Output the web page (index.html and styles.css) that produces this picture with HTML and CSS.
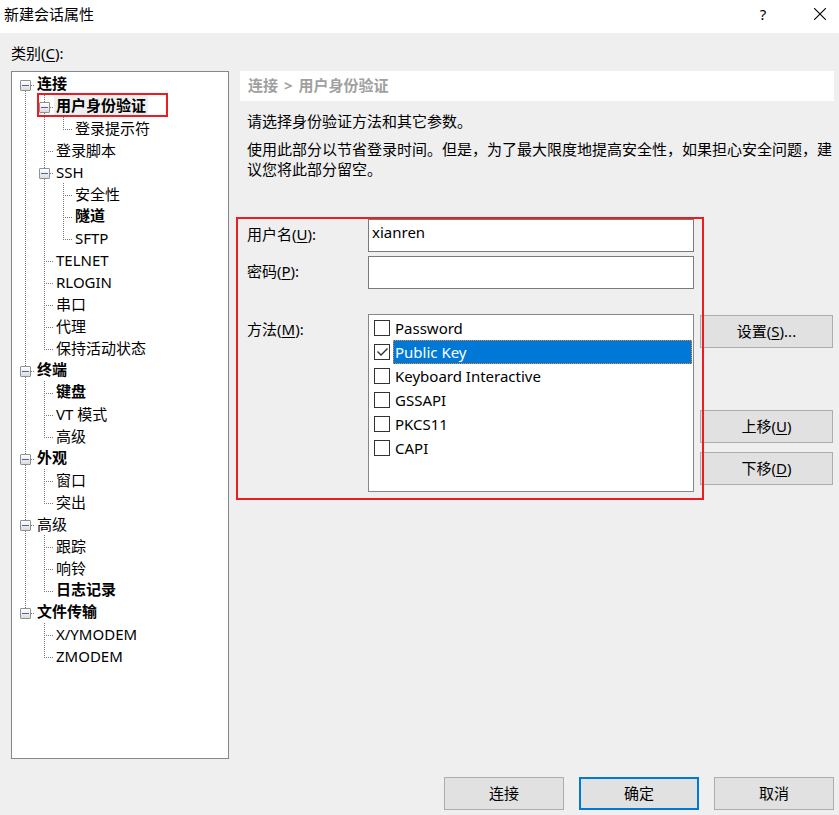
FILE: index.html
```html
<!DOCTYPE html>
<html lang="zh-CN">
<head>
<meta charset="utf-8">
<meta name="viewport" content="width=device-width, initial-scale=1">
<title>新建会话属性</title>
<link rel="stylesheet" href="styles.css">
</head>
<body>
<header class="titlebar">
  <h1 class="title">新建会话属性</h1>
  <button class="caption" type="button">?</button>
  <button class="caption" type="button" aria-label="关闭">
    <svg width="12" height="12" viewBox="0 0 12 12" fill="none" stroke="#000" stroke-width="1.1"><path d="M0 0L12 12M12 0L0 12"/></svg>
  </button>
</header>
<main class="content">
  <nav class="sidebar">
    <h2 class="category" id="category">类别(<u>C</u>):</h2>
    <div class="tree-box">
      <ul class="tree" aria-labelledby="category">
        <li>
          <div class="row"><button class="toggle" type="button" aria-label="折叠"></button><a class="node strong" href="#">连接</a></div>
          <ul>
            <li>
              <div class="row marked"><button class="toggle" type="button" aria-label="折叠"></button><a class="node strong selected" href="#">用户身份验证</a></div>
              <ul>
                <li><div class="row"><a class="node" href="#">登录提示符</a></div></li>
              </ul>
            </li>
            <li><div class="row"><a class="node" href="#">登录脚本</a></div></li>
            <li>
              <div class="row"><button class="toggle" type="button" aria-label="折叠"></button><a class="node" href="#">SSH</a></div>
              <ul>
                <li><div class="row"><a class="node" href="#">安全性</a></div></li>
                <li><div class="row"><a class="node strong" href="#">隧道</a></div></li>
                <li><div class="row"><a class="node" href="#">SFTP</a></div></li>
              </ul>
            </li>
            <li><div class="row"><a class="node" href="#">TELNET</a></div></li>
            <li><div class="row"><a class="node" href="#">RLOGIN</a></div></li>
            <li><div class="row"><a class="node" href="#">串口</a></div></li>
            <li><div class="row"><a class="node" href="#">代理</a></div></li>
            <li><div class="row"><a class="node" href="#">保持活动状态</a></div></li>
          </ul>
        </li>
        <li>
          <div class="row"><button class="toggle" type="button" aria-label="折叠"></button><a class="node strong" href="#">终端</a></div>
          <ul>
            <li><div class="row"><a class="node strong" href="#">键盘</a></div></li>
            <li><div class="row"><a class="node" href="#">VT 模式</a></div></li>
            <li><div class="row"><a class="node" href="#">高级</a></div></li>
          </ul>
        </li>
        <li>
          <div class="row"><button class="toggle" type="button" aria-label="折叠"></button><a class="node strong" href="#">外观</a></div>
          <ul>
            <li><div class="row"><a class="node" href="#">窗口</a></div></li>
            <li><div class="row"><a class="node" href="#">突出</a></div></li>
          </ul>
        </li>
        <li>
          <div class="row"><button class="toggle" type="button" aria-label="折叠"></button><a class="node" href="#">高级</a></div>
          <ul>
            <li><div class="row"><a class="node" href="#">跟踪</a></div></li>
            <li><div class="row"><a class="node" href="#">响铃</a></div></li>
            <li><div class="row"><a class="node strong" href="#">日志记录</a></div></li>
          </ul>
        </li>
        <li>
          <div class="row"><button class="toggle" type="button" aria-label="折叠"></button><a class="node strong" href="#">文件传输</a></div>
          <ul>
            <li><div class="row"><a class="node" href="#">X/YMODEM</a></div></li>
            <li><div class="row"><a class="node" href="#">ZMODEM</a></div></li>
          </ul>
        </li>
      </ul>
    </div>
  </nav>
  <section class="panel">
    <h2 class="crumbs"><span>连接</span><span>&gt;</span><span>用户身份验证</span></h2>
    <div class="body">
      <p>请选择身份验证方法和其它参数。</p>
      <p>使用此部分以节省登录时间。但是，为了最大限度地提高安全性，如果担心安全问题，建议您将此部分留空。</p>
      <form class="form" id="auth">
        <label class="caption-label" for="user">用户名(<u>U</u>):</label>
        <input class="field" id="user" type="text" value="xianren">
        <label class="caption-label second" for="pass">密码(<u>P</u>):</label>
        <input class="field second" id="pass" type="password">
        <span class="caption-label method" id="method">方法(<u>M</u>):</span>
        <div class="list" role="group" aria-labelledby="method">
          <label class="option"><input type="checkbox"><span>Password</span></label>
          <label class="option active"><input type="checkbox" checked><span>Public Key</span></label>
          <label class="option"><input type="checkbox"><span>Keyboard Interactive</span></label>
          <label class="option"><input type="checkbox"><span>GSSAPI</span></label>
          <label class="option"><input type="checkbox"><span>PKCS11</span></label>
          <label class="option"><input type="checkbox"><span>CAPI</span></label>
        </div>
        <div class="side">
          <button class="btn setup" type="button">设置(<u>S</u>)...</button>
          <button class="btn" type="button">上移(<u>U</u>)</button>
          <button class="btn" type="button">下移(<u>D</u>)</button>
        </div>
        <div class="frame"></div>
      </form>
    </div>
  </section>
</main>
<footer class="actions">
  <button class="btn" type="button">连接</button>
  <button class="btn primary" type="submit" form="auth">确定</button>
  <button class="btn" type="button">取消</button>
</footer>
</body>
</html>
```
FILE: styles.css
```css
*, *::before, *::after {
  box-sizing: border-box;
}

body {
  margin: 0;
  min-height: 100vh;
  display: flex;
  flex-direction: column;
  background: #efefef;
  color: #000;
  font: 15px/20px "Noto Sans", "Noto Sans CJK SC", sans-serif;
}

h1, h2, p, ul {
  margin: 0;
  padding: 0;
  font-size: 15px;
  font-weight: 400;
}

ul {
  list-style: none;
}

button, input {
  font: inherit;
  color: inherit;
}

u {
  text-underline-offset: 2px;
  text-decoration-thickness: 1px;
}

.titlebar {
  display: flex;
  gap: 19px;
  height: 33px;
  padding: 0 0 6px 4px;
  align-items: center;
  background: #fff;
}

.title {
  flex: 1;
}

.caption {
  display: flex;
  align-items: center;
  justify-content: center;
  width: 38px;
  height: 26px;
  padding: 0;
  border: 0;
  background: none;
}

.content {
  flex: 1;
  display: grid;
  grid-template-columns: 218px 1fr;
  column-gap: 11px;
  padding: 10px 5px 18px 11px;
}

.sidebar {
  display: flex;
  flex-direction: column;
}

.category {
  margin-bottom: 8px;
}

.tree-box {
  flex: 1;
  padding: 1px 6px;
  border: 1px solid #828790;
  background: #fff;
}

.tree ul {
  padding-left: 19px;
}

/* Dotted guide running down beside each item and its descendants. */
.tree li {
  background: repeating-linear-gradient(#777 0 1px, transparent 1px 2px) 7px 0 / 1px 100% no-repeat;
}

.tree > li:first-child {
  background-position: 7px 12px;
}

.tree li:last-child {
  background-size: 1px 13px;
}

.row {
  position: relative;
  display: flex;
  align-items: center;
  height: 22px;
  padding-left: 17px;
  background: repeating-linear-gradient(90deg, #777 0 1px, transparent 1px 2px) 7px 12px / 9px 1px no-repeat;
}

.toggle {
  width: 11px;
  height: 11px;
  margin: 3px 4px 0 -15px;
  padding: 0;
  border: 1px solid #919191;
  border-radius: 1px;
  background:
    linear-gradient(#4b63a7, #4b63a7) center / 7px 1px no-repeat,
    linear-gradient(#fff, #dcdcdc);
}

.node {
  padding: 0 2px;
  color: #000;
  text-decoration: none;
}

.strong {
  padding-bottom: 2px;
  font-weight: 700;
}

.selected {
  background: #efefef;
}

.marked::after {
  content: "";
  position: absolute;
  top: -2px;
  left: 0;
  width: 131px;
  height: 24px;
  border: 2px solid #ed1c24;
}

.panel {
  padding-top: 28px;
}

.crumbs {
  display: flex;
  gap: 6px;
  padding: 4px 8px 6px;
  background: #fff;
  color: #a0a0a0;
  font-weight: 700;
}

.body {
  padding: 10px 0 0 7px;
}

.body p + p {
  margin-top: 8px;
}

.form {
  position: relative;
  display: grid;
  grid-template-columns: 121px 1fr 133px;
  column-gap: 6px;
  margin: 40px 1px 0 0;
}

.caption-label {
  grid-column: 1;
  padding-top: 5px;
}

.method {
  margin-top: 25px;
}

.field {
  grid-column: 2;
  min-width: 0;
  height: 33px;
  margin-left: -6px;
  padding: 0 3px 8px;
  border: 1px solid #7a7a7a;
  background: #fff;
  outline: 0;
}

.second {
  margin-top: 4px;
}

.list {
  grid-column: 2;
  height: 178px;
  margin: 25px 0 0 -6px;
  padding: 1px 1px 0 5px;
  border: 1px solid #828790;
  background: #fff;
}

.option {
  display: flex;
  align-items: center;
  gap: 3px;
  height: 24px;
}

.option span {
  flex: 1;
  padding: 1px;
  border: 1px solid transparent;
}

.active span {
  border: 1px dotted #ff8728;
  background: #0078d7;
  color: #fff;
}

.option input {
  appearance: none;
  width: 16px;
  height: 16px;
  margin: 0;
  border: 1px solid #333;
  background: #fff;
}

.option input:checked::before {
  content: "";
  display: block;
  width: 14px;
  height: 14px;
  background: #333;
  clip-path: polygon(2px 7px, 3px 6px, 6px 9px, 12px 3px, 13px 4px, 6px 11px);
}

.side {
  grid-column: 3;
  display: flex;
  flex-direction: column;
  gap: 9px;
  padding-top: 26px;
}

.btn {
  height: 33px;
  padding: 0 8px 2px;
  border: 1px solid #adadad;
  background: #e1e1e1;
}

.setup {
  margin-bottom: 53px;
}

/* Highlight drawn over the credentials and method fields. */
.frame {
  position: absolute;
  top: -2px;
  left: -11px;
  right: 129px;
  bottom: -8px;
  border: 2px solid #ed1c24;
  pointer-events: none;
}

.actions {
  display: flex;
  justify-content: flex-end;
  gap: 15px;
  padding: 0 5px 5px;
}

.actions .btn {
  width: 120px;
}

.primary {
  border: 2px solid #0078d7;
}
```
